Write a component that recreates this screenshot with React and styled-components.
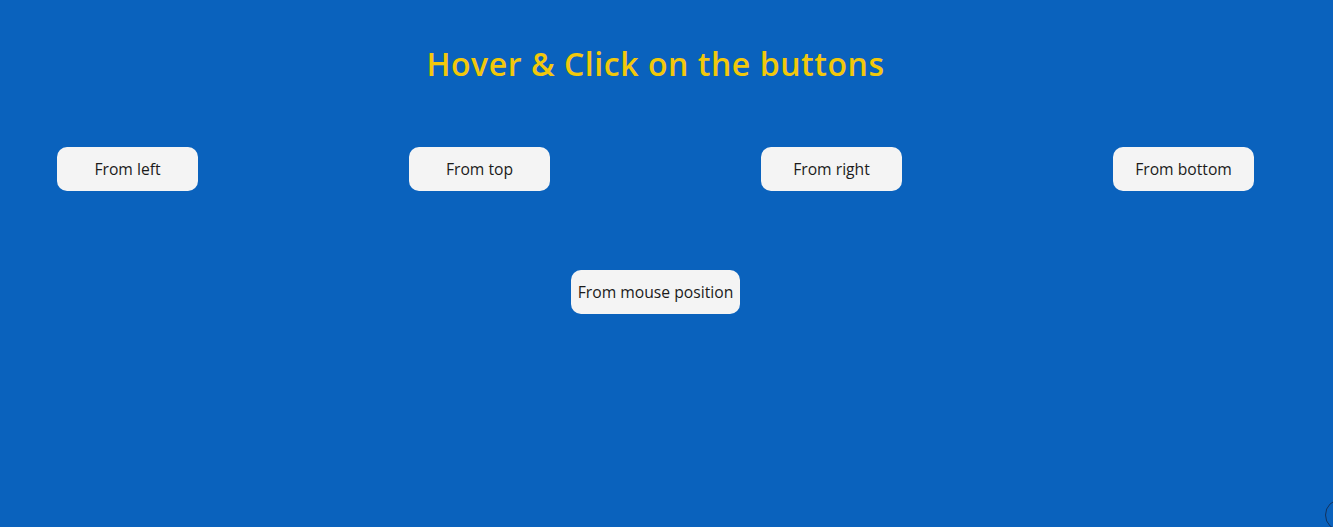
import React from 'react';
import styled, { createGlobalStyle } from 'styled-components';

const GlobalStyle = createGlobalStyle`
  html, body {
    margin: 0;
    padding: 0;
    background-color: #0a62bd;
    overflow: hidden;
  }
  body {
    font-family: "Open Sans", "Noto Sans", sans-serif;
  }
`

const Page = styled.main`
  width: 1311px;
  height: 527px;
  padding-top: 38px;
  box-sizing: border-box;
`

const Title = styled.h1`
  margin: 0;
  text-align: center;
  font-size: 32px;
  font-weight: 600;
  letter-spacing: 0.55px;
  line-height: 52px;
  color: #f2c80b;
`

const Row = styled.div`
  display: flex;
  gap: 211px;
  padding-left: 57px;
  margin-top: 57px;
`

const Centered = styled.div`
  display: flex;
  justify-content: center;
  margin-top: 79px;
`

const Button = styled.button`
  box-sizing: border-box;
  width: ${ p => p.$wide ? 'auto' : '141px' };
  height: 44px;
  padding: 0 7px 1px;
  border: none;
  border-radius: 10px;
  background-color: #f4f4f4;
  color: #1b1b1b;
  font-family: "Open Sans", "Noto Sans", sans-serif;
  font-size: 15.7px;
  cursor: pointer;
  flex-shrink: 0;
`

const Cursor = styled.div`
  position: fixed;
  left: 1325px;
  top: 499px;
  width: 30px;
  height: 30px;
  border: 1.5px solid #14325c;
  border-radius: 50%;
  pointer-events: none;
`

export default function App() {
  const directions = ['From left', 'From top', 'From right', 'From bottom'];

  return (
    <>
      <GlobalStyle />
      <Page>
        <Title>Hover &amp; Click on the buttons</Title>
        <Row>
          { directions.map(d => <Button key={ d }>{ d }</Button>) }
        </Row>
        <Centered>
          <Button $wide>From mouse position</Button>
        </Centered>
      </Page>
      <Cursor />
    </>
  )
}
